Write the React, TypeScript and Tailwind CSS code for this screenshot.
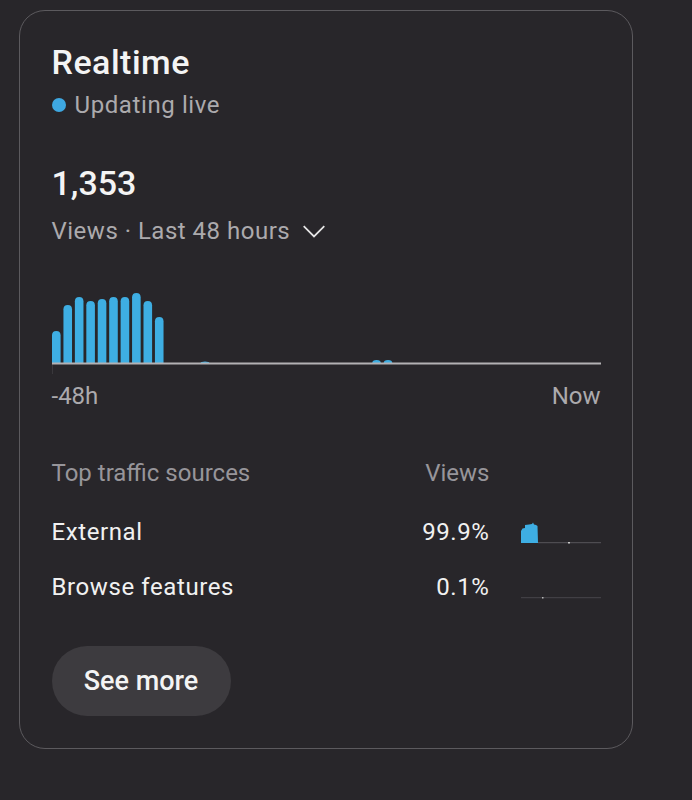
import React from "react";

const bars = [32, 58, 66, 62, 64, 66, 66, 70, 62, 46];
const tiny: Record<number, number> = { 13: 1.5, 28: 3, 29: 3 };

function Chart() {
  const pitch = 549 / 48;
  const base = 78;
  const items: React.ReactNode[] = [];
  for (let i = 0; i < 48; i++) {
    const h = i < bars.length ? bars[i] : tiny[i] ?? 0;
    if (!h) continue;
    const x = i * pitch;
    const w = 8.6;
    const r = Math.min(4.3, h);
    const y = base - h;
    items.push(
      <path
        key={i}
        d={`M${x} ${base} L${x} ${y + r} Q${x} ${y} ${x + w / 2} ${y} Q${x + w} ${y} ${x + w} ${y + r} L${x + w} ${base} Z`}
        fill="#3eaee3"
      />
    );
  }
  return (
    <svg width="551" height="90" viewBox="0 0 551 90" className="block">
      {items}
      <line x1="0.5" y1={base} x2="0.5" y2="89" stroke="#3a383c" strokeWidth="1" />
      <line x1="0" y1={base + 0.5} x2="549" y2={base + 0.5} stroke="#b3b1b4" strokeWidth="2" />
    </svg>
  );
}

function SparkExternal() {
  return (
    <svg width="80" height="28" viewBox="0 0 80 28" className="block">
      <path d="M0 25 L0 13 L1.5 10.5 L4 10 L4 7 L8 6.5 L11 6 L12 4.5 L13 6.5 L15 7 L16.5 8 L17 25 Z" fill="#3eaee3" />
      <line x1="17" y1="24.7" x2="80" y2="24.7" stroke="#58565a" strokeWidth="1" />
      <rect x="47" y="24" width="2" height="1.5" fill="#c8c8c8" />
    </svg>
  );
}

function SparkBrowse() {
  return (
    <svg width="80" height="28" viewBox="0 0 80 28" className="block">
      <line x1="0" y1="24.7" x2="80" y2="24.7" stroke="#48464a" strokeWidth="1" />
      <rect x="21" y="24" width="1.5" height="1.5" fill="#b8b8b8" />
    </svg>
  );
}

export default function App() {
  return (
    <div
      className="w-[692px] h-[800px] bg-[#28262a] pt-[10px] pl-[19px] overflow-hidden"
      style={{ fontFamily: "Roboto, 'Noto Sans', sans-serif" }}
    >
      <div className="w-[614px] h-[739px] rounded-[26px] border-[1.5px] border-[#5c5a5e] bg-[#28262a] pl-[31.5px] pr-[31px] pt-[31px]">
        <div className="text-[34px] leading-[40px] font-medium text-[#f4f4f4] tracking-[0.5px]">Realtime</div>
        <div className="mt-[9px] flex items-center h-[28px]">
          <span className="w-[14px] h-[14px] rounded-full bg-[#3ea8e2] mr-[9px]" />
          <span className="text-[24px] leading-[28px] text-[#acaaad] tracking-[0.6px]">Updating live</span>
        </div>
        <div className="mt-[44px] text-[34px] leading-[40px] font-medium text-[#f4f4f4]">1,353</div>
        <div className="mt-[14px] flex items-center h-[28px] text-[24px] leading-[28px] text-[#acaaad] tracking-[0.5px]">
          <span>Views · Last 48 hours</span>
          <svg width="26" height="26" viewBox="0 0 24 24" className="ml-[11px]">
            <path d="M2.5 7.5 L12 17 L21.5 7.5" fill="none" stroke="#e6e6e6" strokeWidth="1.6" />
          </svg>
        </div>
        <div className="mt-[40px] w-[551px]">
          <Chart />
        </div>
        <div className="mt-[9px] w-[549px] flex justify-between text-[24px] leading-[24px] text-[#acaaad]">
          <span>-48h</span>
          <span>Now</span>
        </div>
        <div className="mt-[51px] w-[549px] grid grid-cols-[1fr_auto_80px] gap-x-[31px] items-center">
          <div className="text-[24px] leading-[28px] text-[#97959a]">Top traffic sources</div>
          <div className="text-[24px] leading-[28px] text-[#97959a] text-right">Views</div>
          <div />
          <div className="mt-[31px] text-[24px] leading-[28px] text-[#f1f1f1] tracking-[0.6px]">External</div>
          <div className="mt-[31px] text-[24px] leading-[28px] text-[#f1f1f1] text-right tracking-[0.6px]">99.9%</div>
          <div className="mt-[31px]"><SparkExternal /></div>
          <div className="mt-[27px] text-[24px] leading-[28px] text-[#f1f1f1] tracking-[0.6px]">Browse features</div>
          <div className="mt-[27px] text-[24px] leading-[28px] text-[#f1f1f1] text-right tracking-[0.6px]">0.1%</div>
          <div className="mt-[27px]"><SparkBrowse /></div>
        </div>
        <button className="mt-[45px] w-[179px] h-[70px] rounded-full bg-[#3d3b3f] text-[27px] font-medium text-[#f4f4f4] flex items-center justify-center">
          See more
        </button>
      </div>
    </div>
  );
}
